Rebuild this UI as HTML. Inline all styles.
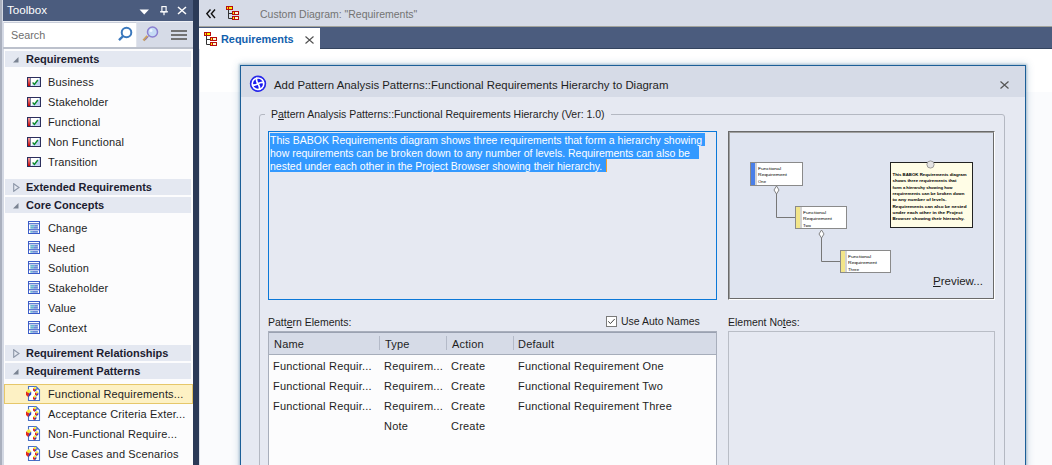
<!DOCTYPE html>
<html><head><meta charset="utf-8">
<style>
*{margin:0;padding:0;box-sizing:border-box}
html,body{width:1052px;height:465px;overflow:hidden;background:#fff;font-family:"Liberation Sans",sans-serif;color:#1e1e1e}
.a{position:absolute}
.t{position:absolute;white-space:nowrap;font-size:11px;line-height:13px}
.hdr{position:absolute;left:5px;width:186px;height:16px;background:#e4e8f1}
.hdr .t{left:21px;top:1px;font-weight:bold;color:#1a1a2a}
.item .t{left:48px;color:#1e1e1e}
.nar{font-size:11.6px;transform:scaleX(0.905);transform-origin:0 0;color:#1e1e1e}
.tb{font-size:11px;letter-spacing:.2px;color:#1e1e1e}
</style></head><body>

<!-- ============ TOOLBOX ============ -->
<div class="a" style="left:0;top:0;width:193px;height:465px;background:#fcfcfd"></div>
<div class="a" style="left:0;top:0;width:3px;height:465px;background:#aab0be"></div>
<div class="a" style="left:2px;top:0;width:2px;height:465px;background:#d3d8e3"></div>
<!-- title -->
<div class="a" style="left:3px;top:0;width:190px;height:21px;background:#4b5c7e"></div>
<div class="t" style="left:7px;top:3px;font-size:11.6px;line-height:14px;color:#fff">Toolbox</div>
<svg class="a" style="left:139px;top:9px" width="11" height="6"><path d="M0.5 0.5 L10 0.5 L5.25 5.5Z" fill="#fff"/></svg>
<svg class="a" style="left:160px;top:6px" width="8" height="10"><rect x="1.9" y="0.6" width="4.2" height="5.2" fill="none" stroke="#fff" stroke-width="1.15"/><rect x="0" y="5.2" width="8" height="1.2" fill="#fff"/><rect x="3.4" y="6" width="1.2" height="3.2" fill="#fff"/></svg>
<svg class="a" style="left:177px;top:6px" width="10" height="9"><path d="M1 1L9 8M9 1L1 8" stroke="#fff" stroke-width="1.5"/></svg>
<!-- toolbar -->
<div class="a" style="left:3px;top:21px;width:190px;height:1px;background:#eef0f5"></div>
<div class="a" style="left:3px;top:22px;width:190px;height:26px;background:#d6dbe7"></div>
<div class="a" style="left:4px;top:22px;width:133px;height:25px;background:#fff;border-top:1px solid #c9ceda;border-right:1px solid #e2e5ec"></div>
<div class="t" style="left:11px;top:29px;font-size:10.8px;color:#6e6e6e">Search</div>
<svg class="a" style="left:117px;top:25px" width="16" height="17"><circle cx="9.5" cy="7.5" r="4.8" stroke="#3a78bd" stroke-width="2" fill="none"/><path d="M6.2 11L2 15.2" stroke="#3a78bd" stroke-width="2.4"/></svg>
<svg class="a" style="left:142px;top:26px" width="18" height="16"><path d="M5.5 10L1.5 14.5" stroke="#c8a060" stroke-width="2.6"/><path d="M6.5 10.5L3 14.2" stroke="#8a72c0" stroke-width="1"/><circle cx="10.5" cy="6" r="5" fill="#c6dcf5" stroke="#8b7fd0" stroke-width="1.5"/><circle cx="9" cy="4.5" r="1.5" fill="#eef6ff"/></svg>
<div class="a" style="left:171px;top:30px;width:16px;height:2px;background:#727272"></div>
<div class="a" style="left:171px;top:34px;width:16px;height:2px;background:#727272"></div>
<div class="a" style="left:171px;top:38px;width:16px;height:2px;background:#727272"></div>
<div class="a" style="left:3px;top:47px;width:190px;height:2px;background:#bcc1cc"></div>

<!--LIST-->
<div class="hdr" style="top:51px"></div>
<svg class="a" style="left:13px;top:57px" width="6" height="6"><path d="M5.5 0L5.5 5.5L0 5.5Z" fill="#7a8392"/></svg>
<div class="t" style="left:26px;top:53px;font-weight:bold;color:#1c1c30">Requirements</div>
<svg class="a" style="left:27px;top:77px" width="14" height="10"><defs><linearGradient id="rg" x1="0" y1="0" x2="0" y2="1"><stop offset="0" stop-color="#f4a0a0"/><stop offset="1" stop-color="#c80000"/></linearGradient></defs><rect x="0.5" y="0.5" width="13" height="9" fill="#fff" stroke="#2b2e5c"/><rect x="1" y="1" width="2" height="8" fill="url(#rg)"/><rect x="3" y="1" width="0.8" height="8" fill="#5a5a80"/><path d="M4 8.8L13 8.8L13 1.5Z" fill="#b8d4f2"/><rect x="12" y="1" width="1" height="8" fill="#b8d4f2"/><path d="M5.6 5.6L7.4 7.4L10.8 3" stroke="#0a8a2a" stroke-width="1.4" fill="none"/></svg>
<div class="t" style="left:48px;top:76px;letter-spacing:.15px">Business</div>
<svg class="a" style="left:27px;top:97px" width="14" height="10"><defs><linearGradient id="rg" x1="0" y1="0" x2="0" y2="1"><stop offset="0" stop-color="#f4a0a0"/><stop offset="1" stop-color="#c80000"/></linearGradient></defs><rect x="0.5" y="0.5" width="13" height="9" fill="#fff" stroke="#2b2e5c"/><rect x="1" y="1" width="2" height="8" fill="url(#rg)"/><rect x="3" y="1" width="0.8" height="8" fill="#5a5a80"/><path d="M4 8.8L13 8.8L13 1.5Z" fill="#b8d4f2"/><rect x="12" y="1" width="1" height="8" fill="#b8d4f2"/><path d="M5.6 5.6L7.4 7.4L10.8 3" stroke="#0a8a2a" stroke-width="1.4" fill="none"/></svg>
<div class="t" style="left:48px;top:96px;letter-spacing:.15px">Stakeholder</div>
<svg class="a" style="left:27px;top:117px" width="14" height="10"><defs><linearGradient id="rg" x1="0" y1="0" x2="0" y2="1"><stop offset="0" stop-color="#f4a0a0"/><stop offset="1" stop-color="#c80000"/></linearGradient></defs><rect x="0.5" y="0.5" width="13" height="9" fill="#fff" stroke="#2b2e5c"/><rect x="1" y="1" width="2" height="8" fill="url(#rg)"/><rect x="3" y="1" width="0.8" height="8" fill="#5a5a80"/><path d="M4 8.8L13 8.8L13 1.5Z" fill="#b8d4f2"/><rect x="12" y="1" width="1" height="8" fill="#b8d4f2"/><path d="M5.6 5.6L7.4 7.4L10.8 3" stroke="#0a8a2a" stroke-width="1.4" fill="none"/></svg>
<div class="t" style="left:48px;top:116px;letter-spacing:.15px">Functional</div>
<svg class="a" style="left:27px;top:137px" width="14" height="10"><defs><linearGradient id="rg" x1="0" y1="0" x2="0" y2="1"><stop offset="0" stop-color="#f4a0a0"/><stop offset="1" stop-color="#c80000"/></linearGradient></defs><rect x="0.5" y="0.5" width="13" height="9" fill="#fff" stroke="#2b2e5c"/><rect x="1" y="1" width="2" height="8" fill="url(#rg)"/><rect x="3" y="1" width="0.8" height="8" fill="#5a5a80"/><path d="M4 8.8L13 8.8L13 1.5Z" fill="#b8d4f2"/><rect x="12" y="1" width="1" height="8" fill="#b8d4f2"/><path d="M5.6 5.6L7.4 7.4L10.8 3" stroke="#0a8a2a" stroke-width="1.4" fill="none"/></svg>
<div class="t" style="left:48px;top:136px;letter-spacing:.15px">Non Functional</div>
<svg class="a" style="left:27px;top:157px" width="14" height="10"><defs><linearGradient id="rg" x1="0" y1="0" x2="0" y2="1"><stop offset="0" stop-color="#f4a0a0"/><stop offset="1" stop-color="#c80000"/></linearGradient></defs><rect x="0.5" y="0.5" width="13" height="9" fill="#fff" stroke="#2b2e5c"/><rect x="1" y="1" width="2" height="8" fill="url(#rg)"/><rect x="3" y="1" width="0.8" height="8" fill="#5a5a80"/><path d="M4 8.8L13 8.8L13 1.5Z" fill="#b8d4f2"/><rect x="12" y="1" width="1" height="8" fill="#b8d4f2"/><path d="M5.6 5.6L7.4 7.4L10.8 3" stroke="#0a8a2a" stroke-width="1.4" fill="none"/></svg>
<div class="t" style="left:48px;top:156px;letter-spacing:.15px">Transition</div>
<div class="hdr" style="top:179px"></div>
<svg class="a" style="left:13px;top:183px" width="7" height="9"><path d="M0.7 0.7L6 4.5L0.7 8.3Z" fill="none" stroke="#8d97a8" stroke-width="1.1"/></svg>
<div class="t" style="left:26px;top:181px;font-weight:bold;color:#1c1c30">Extended Requirements</div>
<div class="hdr" style="top:197px"></div>
<svg class="a" style="left:13px;top:203px" width="6" height="6"><path d="M5.5 0L5.5 5.5L0 5.5Z" fill="#7a8392"/></svg>
<div class="t" style="left:26px;top:199px;font-weight:bold;color:#1c1c30">Core Concepts</div>
<svg class="a" style="left:28px;top:221px" width="12" height="13"><rect x="0.5" y="0.5" width="11" height="12" fill="#fff" stroke="#3a5cc8"/><rect x="1" y="2.2" width="10" height="1.1" fill="#3a5cc8"/><rect x="1" y="8.2" width="10" height="1.1" fill="#3a5cc8"/><rect x="2.3" y="4.3" width="4" height="1.2" fill="#2a9ab8"/><rect x="6.3" y="4.3" width="3.6" height="1.2" fill="#2a5cc8"/><rect x="2.3" y="6.3" width="3" height="1.2" fill="#2a9ab8"/><rect x="5.3" y="6.3" width="4.6" height="1.2" fill="#2a5cc8"/><rect x="2.3" y="10.3" width="2" height="1.2" fill="#2a9ab8"/><rect x="4.3" y="10.3" width="5.6" height="1.2" fill="#2a5cc8"/></svg>
<div class="t" style="left:48px;top:222px;letter-spacing:.15px">Change</div>
<svg class="a" style="left:28px;top:241px" width="12" height="13"><rect x="0.5" y="0.5" width="11" height="12" fill="#fff" stroke="#3a5cc8"/><rect x="1" y="2.2" width="10" height="1.1" fill="#3a5cc8"/><rect x="1" y="8.2" width="10" height="1.1" fill="#3a5cc8"/><rect x="2.3" y="4.3" width="4" height="1.2" fill="#2a9ab8"/><rect x="6.3" y="4.3" width="3.6" height="1.2" fill="#2a5cc8"/><rect x="2.3" y="6.3" width="3" height="1.2" fill="#2a9ab8"/><rect x="5.3" y="6.3" width="4.6" height="1.2" fill="#2a5cc8"/><rect x="2.3" y="10.3" width="2" height="1.2" fill="#2a9ab8"/><rect x="4.3" y="10.3" width="5.6" height="1.2" fill="#2a5cc8"/></svg>
<div class="t" style="left:48px;top:242px;letter-spacing:.15px">Need</div>
<svg class="a" style="left:28px;top:261px" width="12" height="13"><rect x="0.5" y="0.5" width="11" height="12" fill="#fff" stroke="#3a5cc8"/><rect x="1" y="2.2" width="10" height="1.1" fill="#3a5cc8"/><rect x="1" y="8.2" width="10" height="1.1" fill="#3a5cc8"/><rect x="2.3" y="4.3" width="4" height="1.2" fill="#2a9ab8"/><rect x="6.3" y="4.3" width="3.6" height="1.2" fill="#2a5cc8"/><rect x="2.3" y="6.3" width="3" height="1.2" fill="#2a9ab8"/><rect x="5.3" y="6.3" width="4.6" height="1.2" fill="#2a5cc8"/><rect x="2.3" y="10.3" width="2" height="1.2" fill="#2a9ab8"/><rect x="4.3" y="10.3" width="5.6" height="1.2" fill="#2a5cc8"/></svg>
<div class="t" style="left:48px;top:262px;letter-spacing:.15px">Solution</div>
<svg class="a" style="left:28px;top:281px" width="12" height="13"><rect x="0.5" y="0.5" width="11" height="12" fill="#fff" stroke="#3a5cc8"/><rect x="1" y="2.2" width="10" height="1.1" fill="#3a5cc8"/><rect x="1" y="8.2" width="10" height="1.1" fill="#3a5cc8"/><rect x="2.3" y="4.3" width="4" height="1.2" fill="#2a9ab8"/><rect x="6.3" y="4.3" width="3.6" height="1.2" fill="#2a5cc8"/><rect x="2.3" y="6.3" width="3" height="1.2" fill="#2a9ab8"/><rect x="5.3" y="6.3" width="4.6" height="1.2" fill="#2a5cc8"/><rect x="2.3" y="10.3" width="2" height="1.2" fill="#2a9ab8"/><rect x="4.3" y="10.3" width="5.6" height="1.2" fill="#2a5cc8"/></svg>
<div class="t" style="left:48px;top:282px;letter-spacing:.15px">Stakeholder</div>
<svg class="a" style="left:28px;top:301px" width="12" height="13"><rect x="0.5" y="0.5" width="11" height="12" fill="#fff" stroke="#3a5cc8"/><rect x="1" y="2.2" width="10" height="1.1" fill="#3a5cc8"/><rect x="1" y="8.2" width="10" height="1.1" fill="#3a5cc8"/><rect x="2.3" y="4.3" width="4" height="1.2" fill="#2a9ab8"/><rect x="6.3" y="4.3" width="3.6" height="1.2" fill="#2a5cc8"/><rect x="2.3" y="6.3" width="3" height="1.2" fill="#2a9ab8"/><rect x="5.3" y="6.3" width="4.6" height="1.2" fill="#2a5cc8"/><rect x="2.3" y="10.3" width="2" height="1.2" fill="#2a9ab8"/><rect x="4.3" y="10.3" width="5.6" height="1.2" fill="#2a5cc8"/></svg>
<div class="t" style="left:48px;top:302px;letter-spacing:.15px">Value</div>
<svg class="a" style="left:28px;top:321px" width="12" height="13"><rect x="0.5" y="0.5" width="11" height="12" fill="#fff" stroke="#3a5cc8"/><rect x="1" y="2.2" width="10" height="1.1" fill="#3a5cc8"/><rect x="1" y="8.2" width="10" height="1.1" fill="#3a5cc8"/><rect x="2.3" y="4.3" width="4" height="1.2" fill="#2a9ab8"/><rect x="6.3" y="4.3" width="3.6" height="1.2" fill="#2a5cc8"/><rect x="2.3" y="6.3" width="3" height="1.2" fill="#2a9ab8"/><rect x="5.3" y="6.3" width="4.6" height="1.2" fill="#2a5cc8"/><rect x="2.3" y="10.3" width="2" height="1.2" fill="#2a9ab8"/><rect x="4.3" y="10.3" width="5.6" height="1.2" fill="#2a5cc8"/></svg>
<div class="t" style="left:48px;top:322px;letter-spacing:.15px">Context</div>
<div class="hdr" style="top:345px"></div>
<svg class="a" style="left:13px;top:349px" width="7" height="9"><path d="M0.7 0.7L6 4.5L0.7 8.3Z" fill="none" stroke="#8d97a8" stroke-width="1.1"/></svg>
<div class="t" style="left:26px;top:347px;font-weight:bold;color:#1c1c30">Requirement Relationships</div>
<div class="hdr" style="top:363px"></div>
<svg class="a" style="left:13px;top:369px" width="6" height="6"><path d="M5.5 0L5.5 5.5L0 5.5Z" fill="#7a8392"/></svg>
<div class="t" style="left:26px;top:365px;font-weight:bold;color:#1c1c30">Requirement Patterns</div>
<div class="a" style="left:4px;top:384px;width:189px;height:20px;background:#fdf1c4;border:1px solid #e6c76a"></div>
<svg class="a" style="left:25px;top:386px" width="16" height="17"><path d="M3.5 0.5H11L14.5 4V14.5H3.5Z" fill="#fff" stroke="#4670c8" stroke-width="1.1"/><circle cx="12.3" cy="2.7" r="0.9" fill="#4670c8"/><path d="M1.00 5.62L3.86 3.00L6.20 5.46L4.22 7.51Z" fill="#f4ea38"/><path d="M1.00 5.62L4.22 7.51L3.34 11.20L1.00 8.90Z" fill="#e52a1a"/><path d="M4.22 7.51L6.20 5.46L6.20 8.58L3.34 11.20Z" fill="#2a3ab5"/><path d="M8.00 2.33L9.98 0.60L11.60 2.22L10.23 3.57Z" fill="#f4ea38"/><path d="M8.00 2.33L10.23 3.57L9.62 6.00L8.00 4.49Z" fill="#e52a1a"/><path d="M10.23 3.57L11.60 2.22L11.60 4.27L9.62 6.00Z" fill="#2a3ab5"/><path d="M10.00 6.53L11.87 4.80L13.40 6.42L12.11 7.77Z" fill="#f4ea38"/><path d="M10.00 6.53L12.11 7.77L11.53 10.20L10.00 8.69Z" fill="#e52a1a"/><path d="M12.11 7.77L13.40 6.42L13.40 8.47L11.53 10.20Z" fill="#2a3ab5"/><path d="M8.00 10.73L9.87 9.00L11.40 10.62L10.11 11.97Z" fill="#f4ea38"/><path d="M8.00 10.73L10.11 11.97L9.53 14.40L8.00 12.89Z" fill="#e52a1a"/><path d="M10.11 11.97L11.40 10.62L11.40 12.67L9.53 14.40Z" fill="#2a3ab5"/></svg>
<div class="t" style="left:48px;top:388px;letter-spacing:.15px">Functional Requirements...</div>
<svg class="a" style="left:25px;top:406px" width="16" height="17"><path d="M3.5 0.5H11L14.5 4V14.5H3.5Z" fill="#fff" stroke="#4670c8" stroke-width="1.1"/><circle cx="12.3" cy="2.7" r="0.9" fill="#4670c8"/><path d="M1.00 5.62L3.86 3.00L6.20 5.46L4.22 7.51Z" fill="#f4ea38"/><path d="M1.00 5.62L4.22 7.51L3.34 11.20L1.00 8.90Z" fill="#e52a1a"/><path d="M4.22 7.51L6.20 5.46L6.20 8.58L3.34 11.20Z" fill="#2a3ab5"/><path d="M8.00 2.33L9.98 0.60L11.60 2.22L10.23 3.57Z" fill="#f4ea38"/><path d="M8.00 2.33L10.23 3.57L9.62 6.00L8.00 4.49Z" fill="#e52a1a"/><path d="M10.23 3.57L11.60 2.22L11.60 4.27L9.62 6.00Z" fill="#2a3ab5"/><path d="M10.00 6.53L11.87 4.80L13.40 6.42L12.11 7.77Z" fill="#f4ea38"/><path d="M10.00 6.53L12.11 7.77L11.53 10.20L10.00 8.69Z" fill="#e52a1a"/><path d="M12.11 7.77L13.40 6.42L13.40 8.47L11.53 10.20Z" fill="#2a3ab5"/><path d="M8.00 10.73L9.87 9.00L11.40 10.62L10.11 11.97Z" fill="#f4ea38"/><path d="M8.00 10.73L10.11 11.97L9.53 14.40L8.00 12.89Z" fill="#e52a1a"/><path d="M10.11 11.97L11.40 10.62L11.40 12.67L9.53 14.40Z" fill="#2a3ab5"/></svg>
<div class="t" style="left:48px;top:408px;letter-spacing:.15px">Acceptance Criteria Exter...</div>
<svg class="a" style="left:25px;top:426px" width="16" height="17"><path d="M3.5 0.5H11L14.5 4V14.5H3.5Z" fill="#fff" stroke="#4670c8" stroke-width="1.1"/><circle cx="12.3" cy="2.7" r="0.9" fill="#4670c8"/><path d="M1.00 5.62L3.86 3.00L6.20 5.46L4.22 7.51Z" fill="#f4ea38"/><path d="M1.00 5.62L4.22 7.51L3.34 11.20L1.00 8.90Z" fill="#e52a1a"/><path d="M4.22 7.51L6.20 5.46L6.20 8.58L3.34 11.20Z" fill="#2a3ab5"/><path d="M8.00 2.33L9.98 0.60L11.60 2.22L10.23 3.57Z" fill="#f4ea38"/><path d="M8.00 2.33L10.23 3.57L9.62 6.00L8.00 4.49Z" fill="#e52a1a"/><path d="M10.23 3.57L11.60 2.22L11.60 4.27L9.62 6.00Z" fill="#2a3ab5"/><path d="M10.00 6.53L11.87 4.80L13.40 6.42L12.11 7.77Z" fill="#f4ea38"/><path d="M10.00 6.53L12.11 7.77L11.53 10.20L10.00 8.69Z" fill="#e52a1a"/><path d="M12.11 7.77L13.40 6.42L13.40 8.47L11.53 10.20Z" fill="#2a3ab5"/><path d="M8.00 10.73L9.87 9.00L11.40 10.62L10.11 11.97Z" fill="#f4ea38"/><path d="M8.00 10.73L10.11 11.97L9.53 14.40L8.00 12.89Z" fill="#e52a1a"/><path d="M10.11 11.97L11.40 10.62L11.40 12.67L9.53 14.40Z" fill="#2a3ab5"/></svg>
<div class="t" style="left:48px;top:428px;letter-spacing:.15px">Non-Functional Require...</div>
<svg class="a" style="left:25px;top:446px" width="16" height="17"><path d="M3.5 0.5H11L14.5 4V14.5H3.5Z" fill="#fff" stroke="#4670c8" stroke-width="1.1"/><circle cx="12.3" cy="2.7" r="0.9" fill="#4670c8"/><path d="M1.00 5.62L3.86 3.00L6.20 5.46L4.22 7.51Z" fill="#f4ea38"/><path d="M1.00 5.62L4.22 7.51L3.34 11.20L1.00 8.90Z" fill="#e52a1a"/><path d="M4.22 7.51L6.20 5.46L6.20 8.58L3.34 11.20Z" fill="#2a3ab5"/><path d="M8.00 2.33L9.98 0.60L11.60 2.22L10.23 3.57Z" fill="#f4ea38"/><path d="M8.00 2.33L10.23 3.57L9.62 6.00L8.00 4.49Z" fill="#e52a1a"/><path d="M10.23 3.57L11.60 2.22L11.60 4.27L9.62 6.00Z" fill="#2a3ab5"/><path d="M10.00 6.53L11.87 4.80L13.40 6.42L12.11 7.77Z" fill="#f4ea38"/><path d="M10.00 6.53L12.11 7.77L11.53 10.20L10.00 8.69Z" fill="#e52a1a"/><path d="M12.11 7.77L13.40 6.42L13.40 8.47L11.53 10.20Z" fill="#2a3ab5"/><path d="M8.00 10.73L9.87 9.00L11.40 10.62L10.11 11.97Z" fill="#f4ea38"/><path d="M8.00 10.73L10.11 11.97L9.53 14.40L8.00 12.89Z" fill="#e52a1a"/><path d="M10.11 11.97L11.40 10.62L11.40 12.67L9.53 14.40Z" fill="#2a3ab5"/></svg>
<div class="t" style="left:48px;top:448px;letter-spacing:.15px">Use Cases and Scenarios</div>
<!--/LIST-->

<!-- divider -->
<div class="a" style="left:193px;top:0;width:6px;height:465px;background:#2b3a57"></div>

<!-- ============ MAIN ============ -->
<div class="a" style="left:199px;top:0;width:853px;height:26px;background:#d6dbe7"></div>
<div class="a" style="left:199px;top:26px;width:853px;height:1px;background:#a2a39c"></div>
<div class="a" style="left:199px;top:27px;width:853px;height:22px;background:#4b5c7e"></div>
<div class="a" style="left:199px;top:48px;width:853px;height:1px;background:#34445f"></div>
<svg class="a" style="left:206px;top:9px" width="10" height="10"><path d="M4.5 0.5L0.8 4.7L4.5 9M9 0.5L5.3 4.7L9 9" stroke="#111" stroke-width="1.4" fill="none"/></svg>
<svg class="a" style="left:226px;top:6px" width="14" height="14"><path d="M2.5 4V12.5M2.5 7.5H6M2.5 12.5H6" stroke="#333" stroke-width="1"/><rect x="0" y="0" width="7" height="4" fill="#b80d0d"/><rect x="1" y="1" width="1" height="2" fill="#ffee00"/><rect x="3" y="1" width="3" height="2" fill="#ffee00"/><rect x="6" y="5" width="7" height="4" fill="#b80d0d"/><rect x="7" y="6" width="1" height="2" fill="#ffee00"/><rect x="9" y="6" width="3" height="2" fill="#fff8d0"/><rect x="6" y="10" width="7" height="4" fill="#b80d0d"/><rect x="7" y="11" width="1" height="2" fill="#ffee00"/><rect x="9" y="11" width="3" height="2" fill="#fff8d0"/></svg>
<div class="t nar" style="left:260px;top:7px;color:#737373">Custom Diagram: "Requirements"</div>
<!-- tab -->
<div class="a" style="left:199px;top:28px;width:121px;height:21px;background:#fff"></div>
<svg class="a" style="left:204px;top:32px" width="14" height="14"><path d="M2.5 4V12.5M2.5 7.5H6M2.5 12.5H6" stroke="#333" stroke-width="1"/><rect x="0" y="0" width="7" height="4" fill="#b80d0d"/><rect x="1" y="1" width="1" height="2" fill="#ffee00"/><rect x="3" y="1" width="3" height="2" fill="#ffee00"/><rect x="6" y="5" width="7" height="4" fill="#b80d0d"/><rect x="7" y="6" width="1" height="2" fill="#ffee00"/><rect x="9" y="6" width="3" height="2" fill="#fff8d0"/><rect x="6" y="10" width="7" height="4" fill="#b80d0d"/><rect x="7" y="11" width="1" height="2" fill="#ffee00"/><rect x="9" y="11" width="3" height="2" fill="#fff8d0"/></svg>
<div class="t" style="left:221px;top:33px;font-size:10.9px;font-weight:bold;color:#1160ad">Requirements</div>
<svg class="a" style="left:305px;top:36px" width="9" height="8"><path d="M0.5 0.5L8.5 7.5M8.5 0.5L0.5 7.5" stroke="#505050" stroke-width="1.1"/></svg>

<!-- ============ DIALOG ============ -->
<div class="a" style="left:199px;top:92px;width:853px;height:373px;background:#fafbfd"></div>
<div class="a" style="left:199px;top:49px;width:1px;height:416px;background:#dfe2ea"></div>
<div class="a" style="left:240px;top:65px;width:786px;height:420px;background:#e6e9f2;border:1px solid #1c5f98;box-shadow:0 0 2px 1px rgba(40,100,140,.3),0 0 7px 1px rgba(60,110,150,.25)"></div>
<div class="a" style="left:241px;top:66px;width:784px;height:31px;background:#d6dbe7"></div>
<svg class="a" style="left:249px;top:75px" width="18" height="18"><circle cx="9" cy="8.8" r="7.6" fill="#1a1af0"/><circle cx="9" cy="8.8" r="5.8" fill="none" stroke="#fff" stroke-width="1.7"/><path d="M9 8.8Q6.5 5 8 2.6M9 8.8Q12.8 6.5 15.2 8M9 8.8Q11.5 12.6 10 15M9 8.8Q5.2 11 2.8 9.6" fill="none" stroke="#fff" stroke-width="1.7"/><circle cx="9" cy="8.8" r="7.6" fill="none" stroke="#2828e8" stroke-width="1.2"/></svg>
<div class="t" style="left:274px;top:79px;font-size:11.4px;color:#1e1e1e">Add Pattern Analysis Patterns::Functional Requirements Hierarchy to Diagram</div>
<svg class="a" style="left:1000px;top:81px" width="9" height="8"><path d="M0.5 0.5L8.5 7.5M8.5 0.5L0.5 7.5" stroke="#555" stroke-width="1.2"/></svg>

<!--DLG-->
<div class="a" style="left:259px;top:114px;width:746px;height:380px;border:1px solid #b4b8c2;border-radius:3px"></div>
<div class="a" style="left:265px;top:108px;width:346px;height:14px;background:#e6e9f2"></div>
<div class="t nar" style="left:271px;top:107px;">P<u>a</u>ttern Analysis Patterns::Functional Requirements Hierarchy (Ver: 1.0)</div>
<div class="a" style="left:268px;top:131px;width:449px;height:169px;border:1px solid #0b78d8"></div>
<div class="a" style="left:270px;top:133px;width:435px;height:13px;background:#3399ff"></div>
<div class="a" style="left:270px;top:146px;width:429px;height:13px;background:#3399ff"></div>
<div class="a" style="left:270px;top:159px;width:337px;height:13px;background:#3399ff"></div>
<div class="a" style="left:606px;top:159px;width:1px;height:13px;background:#f0a030"></div>
<div class="t nar" style="left:270px;top:133px;color:#fff">This BABOK Requirements diagram shows three requirements that form a hierarchy showing</div>
<div class="t nar" style="left:270px;top:146px;color:#fff">how requirements can be broken down to any number of levels. Requirements can also be</div>
<div class="t nar" style="left:270px;top:159px;color:#fff">nested under each other in the Project Browser showing their hierarchy.</div>
<div class="a" style="left:728px;top:131px;width:267px;height:169px;border:1px solid;border-color:#6a6a6a #fff #fff #6a6a6a;background:#dfe4f0"></div>
<div class="a" style="left:729px;top:132px;width:265px;height:167px;border:1px solid;border-color:#a0a0a0 #6a6a6a #6a6a6a #a0a0a0"></div>
<svg class="a" style="left:0;top:0" width="1052" height="465"><path d="M776.5 194V217.5H795M821.5 238V261.5H840" stroke="#777" fill="none"/><rect x="750.5" y="162.5" width="52" height="23" fill="#fff" stroke="#8a8a8a"/><rect x="751" y="163" width="4" height="22" fill="#4a7fe8"/><rect x="755.5" y="163" width="1" height="22" fill="#a8a8a8"/><text x="758" y="169.8" font-size="4.3" fill="#000" font-family="Liberation Sans" textLength="23" lengthAdjust="spacingAndGlyphs">Functional</text><text x="758" y="176.20000000000002" font-size="4.3" fill="#000" font-family="Liberation Sans" textLength="29" lengthAdjust="spacingAndGlyphs">Requirement</text><text x="758" y="182.60000000000002" font-size="4.3" fill="#000" font-family="Liberation Sans" textLength="8" lengthAdjust="spacingAndGlyphs">One</text><rect x="795.5" y="206.5" width="51" height="22" fill="#fff" stroke="#8a8a8a"/><rect x="796" y="207" width="4" height="21" fill="#f2e58a"/><rect x="800.5" y="207" width="1" height="21" fill="#a8a8a8"/><text x="803" y="213.8" font-size="4.3" fill="#000" font-family="Liberation Sans" textLength="23" lengthAdjust="spacingAndGlyphs">Functional</text><text x="803" y="220.20000000000002" font-size="4.3" fill="#000" font-family="Liberation Sans" textLength="29" lengthAdjust="spacingAndGlyphs">Requirement</text><text x="803" y="226.60000000000002" font-size="4.3" fill="#000" font-family="Liberation Sans" textLength="8" lengthAdjust="spacingAndGlyphs">Two</text><rect x="840.5" y="250.5" width="50" height="22" fill="#fff" stroke="#8a8a8a"/><rect x="841" y="251" width="4" height="21" fill="#f2e58a"/><rect x="845.5" y="251" width="1" height="21" fill="#a8a8a8"/><text x="848" y="257.8" font-size="4.3" fill="#000" font-family="Liberation Sans" textLength="23" lengthAdjust="spacingAndGlyphs">Functional</text><text x="848" y="264.2" font-size="4.3" fill="#000" font-family="Liberation Sans" textLength="29" lengthAdjust="spacingAndGlyphs">Requirement</text><text x="848" y="270.6" font-size="4.3" fill="#000" font-family="Liberation Sans" textLength="11" lengthAdjust="spacingAndGlyphs">Three</text><path d="M776.5 186L779.0 190L776.5 194L774.0 190Z" fill="#fff" stroke="#777" stroke-width="0.9"/><path d="M821.5 230L824.0 234L821.5 238L819.0 234Z" fill="#fff" stroke="#777" stroke-width="0.9"/><rect x="890.5" y="162.5" width="82" height="65" fill="#fffde6" stroke="#222"/><circle cx="930.5" cy="164.5" r="3.6" fill="#e4e4e4" stroke="#888" stroke-width="0.8"/><text x="892.5" y="176.0" font-size="4.3" font-weight="bold" fill="#000" font-family="Liberation Sans" textLength="74" lengthAdjust="spacingAndGlyphs">This BABOK Requirements diagram</text><text x="892.5" y="182.3" font-size="4.3" font-weight="bold" fill="#000" font-family="Liberation Sans" textLength="64" lengthAdjust="spacingAndGlyphs">shows three requirements that</text><text x="892.5" y="188.6" font-size="4.3" font-weight="bold" fill="#000" font-family="Liberation Sans" textLength="60" lengthAdjust="spacingAndGlyphs">form a hierarchy showing how</text><text x="892.5" y="194.9" font-size="4.3" font-weight="bold" fill="#000" font-family="Liberation Sans" textLength="72" lengthAdjust="spacingAndGlyphs">requirements can be broken down</text><text x="892.5" y="201.2" font-size="4.3" font-weight="bold" fill="#000" font-family="Liberation Sans" textLength="54" lengthAdjust="spacingAndGlyphs">to any number of levels.</text><text x="892.5" y="207.5" font-size="4.3" font-weight="bold" fill="#000" font-family="Liberation Sans" textLength="74" lengthAdjust="spacingAndGlyphs">Requirements can also be nested</text><text x="892.5" y="213.8" font-size="4.3" font-weight="bold" fill="#000" font-family="Liberation Sans" textLength="70" lengthAdjust="spacingAndGlyphs">under each other in the Project</text><text x="892.5" y="220.1" font-size="4.3" font-weight="bold" fill="#000" font-family="Liberation Sans" textLength="72" lengthAdjust="spacingAndGlyphs">Browser showing their hierarchy.</text></svg>
<div class="t" style="left:933px;top:275px;font-size:11.5px;color:#1e1e1e"><u>P</u>review...</div>
<div class="t nar" style="left:268px;top:315px">Patt<u>e</u>rn Elements:</div>
<svg class="a" style="left:606px;top:316px" width="11" height="11"><rect x="0.5" y="0.5" width="10" height="10" fill="#fff" stroke="#7a7a7a"/><path d="M2.3 5.3L4.4 7.6L8.7 3" stroke="#444" stroke-width="1" fill="none"/></svg>
<div class="t nar" style="left:621px;top:314px">Use Auto Names</div>
<div class="t nar" style="left:728px;top:315px">Element No<u>t</u>es:</div>
<div class="a" style="left:728px;top:331px;width:267px;height:200px;border:1px solid #b9bdc6"></div>
<div class="a" style="left:268px;top:331px;width:449px;height:200px;background:#fcfcfd;border:1px solid #a8aebb"></div>
<div class="a" style="left:269px;top:332px;width:447px;height:23px;background:#d6dbe7;border-top:1px solid #9aa1b1;border-bottom:1px solid #a6adba"></div>
<div class="a" style="left:379px;top:336px;width:1px;height:14px;background:#b4bac8"></div>
<div class="a" style="left:446px;top:336px;width:1px;height:14px;background:#b4bac8"></div>
<div class="a" style="left:513px;top:336px;width:1px;height:14px;background:#b4bac8"></div>
<div class="t tb" style="left:274px;top:338px">Name</div>
<div class="t tb" style="left:385px;top:338px">Type</div>
<div class="t tb" style="left:452px;top:338px">Action</div>
<div class="t tb" style="left:518px;top:338px">Default</div>
<div class="t tb" style="left:273px;top:360px">Functional Requir...</div>
<div class="t tb" style="left:384px;top:360px">Requirem...</div>
<div class="t tb" style="left:451px;top:360px">Create</div>
<div class="t tb" style="left:518px;top:360px">Functional Requirement One</div>
<div class="t tb" style="left:273px;top:380px">Functional Requir...</div>
<div class="t tb" style="left:384px;top:380px">Requirem...</div>
<div class="t tb" style="left:451px;top:380px">Create</div>
<div class="t tb" style="left:518px;top:380px">Functional Requirement Two</div>
<div class="t tb" style="left:273px;top:400px">Functional Requir...</div>
<div class="t tb" style="left:384px;top:400px">Requirem...</div>
<div class="t tb" style="left:451px;top:400px">Create</div>
<div class="t tb" style="left:518px;top:400px">Functional Requirement Three</div>
<div class="t tb" style="left:384px;top:420px">Note</div>
<div class="t tb" style="left:451px;top:420px">Create</div>
<!--/DLG-->

</body></html>
